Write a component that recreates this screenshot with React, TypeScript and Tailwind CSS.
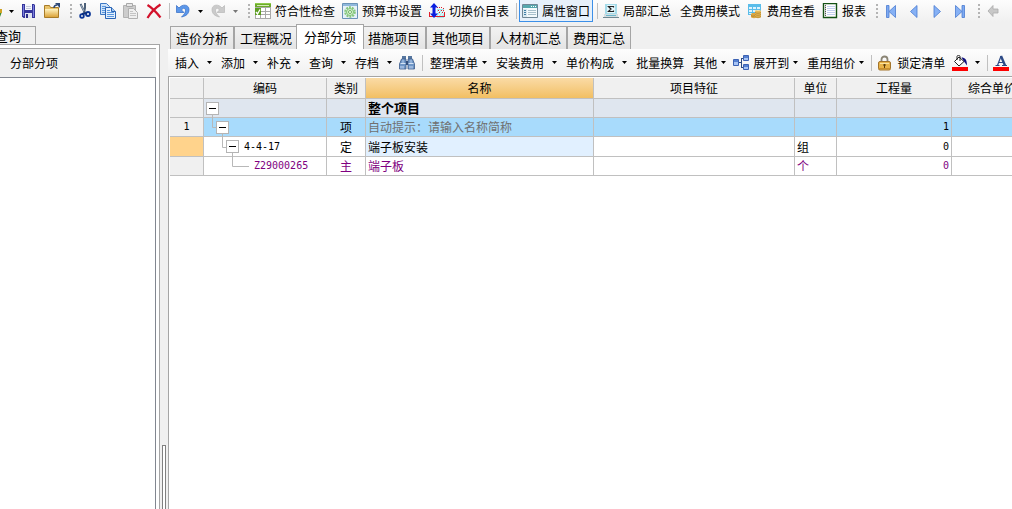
import type { ReactNode } from 'react'
import { clsx } from 'clsx'

const Icon = ({ children }: { children: ReactNode }) => (
  <svg width="16" height="16" viewBox="0 0 16 16" className="shrink-0" aria-hidden="true">
    {children}
  </svg>
)

const SaveIcon = () => (
  <Icon>
    <path d="M1 1h12l1 1v13H2.500L1 13.500z" fill="#35359c" />
    <path d="M2 2h1v11H2zM12 2h1v12h-1z" fill="#7a80dc" />
    <path d="M4 1h7v6H4z" fill="#f4f6fc" />
    <path d="M5 3.500h5M5 5.500h5" stroke="#c3c8da" />
    <path d="M4 10h7v5H4z" fill="#dfe3f0" />
    <path d="M5 11h2v4H5z" fill="#2d2d8a" />
  </Icon>
)

const FolderIcon = () => (
  <Icon>
    <defs>
      <linearGradient id="folder" x1="0" y1="0" x2="0" y2="1">
        <stop offset="0" stopColor="#fff3bf" />
        <stop offset="1" stopColor="#dca43a" />
      </linearGradient>
    </defs>
    <path d="M0.500 2.500h5l1 2h8v10h-14z" fill="#e9c36a" stroke="#a87c28" />
    <path d="M1 6h13v8H1z" fill="url(#folder)" />
    <path d="M10 5c0-2 1-3 3-3" stroke="#2f4a78" strokeWidth="1.500" fill="none" />
    <path d="M11 0h5v5z" fill="#2f4a78" />
  </Icon>
)

const CutIcon = () => (
  <Icon>
    <path d="M3.500 1l4.500 9M8 0v5L7 10" stroke="#4b5f78" strokeWidth="2" fill="none" />
    <path d="M4 2l3 6" stroke="#a5b3c4" />
    <circle cx="5" cy="13" r="1.800" fill="none" stroke="#0a3596" strokeWidth="1.800" />
    <circle cx="11" cy="11" r="2" fill="none" stroke="#0a3596" strokeWidth="1.800" />
    <path d="M5 11l5-1" stroke="#0b2f80" strokeWidth="2" />
  </Icon>
)

const CopyIcon = () => (
  <Icon>
    <path d="M0.500 0.500h6l3 3v8h-9z" fill="#cfe3f9" stroke="#3d78c4" />
    <path d="M2 3.500h4M2 5.500h4M2 7.500h4M2 9.500h4" stroke="#5b97dd" />
    <path d="M5.500 4.500h6l4 4v7h-10z" fill="#e4f0fd" stroke="#2a64b5" />
    <path d="M11.500 4.500v4h4" fill="#a9cbf0" stroke="#2a64b5" />
    <path d="M7 7.500h3M7 9.500h7M7 11.500h7M7 13.500h7" stroke="#5b97dd" />
  </Icon>
)

const PasteIcon = () => (
  <Icon>
    <path d="M0.500 2.500h12v12h-12z" fill="#cdcdcd" stroke="#b2b2b2" />
    <path d="M3.500 0.500h6v3h-6z" fill="#e6e6e6" stroke="#a8a8a8" />
    <path d="M5.500 5.500h5l4 4v6h-9z" fill="#efefef" stroke="#b0b0b0" />
    <path d="M7 8.500h3M7 10.500h6M7 12.500h6" stroke="#c4c4c4" />
  </Icon>
)

const DeleteIcon = () => (
  <Icon>
    <path d="M1.500 2c5 3 9 7.500 13 12.500" stroke="#d3122c" strokeWidth="2.200" fill="none" />
    <path d="M14.500 1.500C9 5 5 9 1.500 15" stroke="#d3122c" strokeWidth="2.200" fill="none" />
  </Icon>
)

const TurnIcon = ({ redo }: { redo?: boolean }) => (
  <Icon>
    <g
      transform={redo ? 'matrix(-1 0 0 1 16 0)' : undefined}
      fill={redo ? '#cbcbcb' : '#5b97ea'}
      stroke={redo ? '#b8b8b8' : '#2f69c4'}
      strokeWidth="0.700"
    >
      <path d="M1.500 2.500v7h7.500L6.500 7C8 4.500 10.500 5 10.500 7.500c0 2.500-1.500 4-4 6.500 5-1 7.500-3.500 7.500-7.500C14 1.500 7.500 0.500 4 5z" />
    </g>
  </Icon>
)

const CheckTableIcon = () => (
  <Icon>
    <path d="M0 0h16v4H0z" fill="#6cab2a" />
    <path d="M0 0h16v1H0z" fill="#8fcb4c" />
    <path d="M2 2h12v1H2z" fill="#d5edb5" />
    <path d="M0 4h16v12H0z" fill="#a9a9a9" />
    <path d="M6 5h4v3H6zM11 5h4v3h-4zM6 9h4v2H6zM11 9h4v2h-4zM1 12h4v3H1zM6 12h4v3H6zM11 12h4v3h-4z" fill="#fff" />
    <path d="M0 5h6v7H0z" fill="#5d9e22" />
    <path d="M1 9l1.500 2L5 6.500" stroke="#fff" strokeWidth="1.300" fill="none" />
  </Icon>
)

const SettingsIcon = () => (
  <Icon>
    <path d="M0.500 0.500h15v15h-15z" fill="#e6f1fa" stroke="#6b93b8" />
    <path d="M1 1h14v2H1z" fill="#8fb8dc" />
    <circle cx="8" cy="9" r="4.800" fill="none" stroke="#86c77c" strokeWidth="2" strokeDasharray="2 1" />
    <circle cx="8" cy="9" r="3.500" fill="#d8f0d2" stroke="#7cc271" />
    <circle cx="8" cy="9" r="1.500" fill="#fff" stroke="#6bb55f" />
  </Icon>
)

const SwitchIcon = () => (
  <Icon>
    <path d="M8 6h7v9H8z" fill="#a4edf2" />
    <path d="M9 13l5-6M11 14l4-5M8 10l3-3" stroke="#fff" />
    <path d="M8 4.500h6M14.500 5v4" stroke="#e0202c" strokeDasharray="1 1" fill="none" />
    <path d="M9 7.500h4M10 9.500h4" stroke="#e0202c" strokeDasharray="1 2" />
    <path d="M0 13.500h16M15.500 9v5M0.500 9v5" stroke="#e0202c" />
    <path d="M5 0l4 4.500H6.500v6H9L5 15 1 10.500h2.500v-6H1z" fill="#0a1fe0" />
  </Icon>
)

const WindowIcon = () => (
  <Icon>
    <path d="M0.500 1.500h15v13h-15z" fill="#f4fafc" stroke="#6f8796" />
    <path d="M1 2h14v3H1z" fill="#56a8ad" />
    <path d="M9 3h1v1H9zM11 3h1v1h-1zM13 3h1v1h-1z" fill="#fff" />
    <path d="M1 6h4v8H1z" fill="#d8e8f0" />
    <path d="M2 7.500h2M2 9.500h2M2 11.500h2" stroke="#3f7ea6" />
    <path d="M6 7.500h8M6 9.500h8M6 11.500h8" stroke="#a8c0cc" />
  </Icon>
)

const SumIcon = () => (
  <Icon>
    <path d="M2 1h12v10H2z" fill="#a5dbe9" />
    <path d="M4 2h8v8H4z" fill="#e4f6fb" />
    <path d="M10.500 4.500V3.500h-5l2.500 2.500-2.500 2.500h5v-1" stroke="#222" strokeWidth="1.200" fill="none" />
    <path d="M1 11h14v3H1z" fill="#d3dde1" />
    <path d="M0 14.500h16" stroke="#6f8791" />
    <path d="M3 12.500h10" stroke="#6cb8cc" />
  </Icon>
)

const CostIcon = () => (
  <Icon>
    <path d="M1 1h13v11H1z" fill="#5bbdea" />
    <path d="M2 4h3v2H2zM6 4h3v2H6zM10 4h3v2h-3zM2 7h3v2H2zM6 7h3v2H6zM2 10h3v1H2z" fill="#dff3fd" />
    <path d="M4 11c0-1.500 6-1.500 6 0v3c0 1.500-6 1.500-6 0z" fill="#dba640" />
    <path d="M8 8c0-1.500 6-1.500 6 0v6c0 1.500-6 1.500-6 0z" fill="#e6b955" />
    <path d="M8 9.500c1 1 5 1 6 0M8 11.500c1 1 5 1 6 0M8 13.500c1 1 5 1 6 0M4 12.500c1 1 3 1 4 0" stroke="#a77722" strokeWidth="0.700" fill="none" />
    <path d="M8.500 8c1-0.800 4-0.800 5 0" stroke="#f8e2a4" fill="none" />
  </Icon>
)

const ReportIcon = () => (
  <Icon>
    <path d="M1.500 0.500h13v14h-13z" fill="#fff" stroke="#145214" strokeWidth="1.400" />
    <path d="M2 1h2v13H2z" fill="#c9d3c9" />
    <path d="M3.500 2v12" stroke="#555" strokeDasharray="1 1" />
    <path d="M5 3.500h8M5 5.500h8M5 7.500h8M5 9.500h8M5 11.500h8" stroke="#c4cff0" />
  </Icon>
)

const StepIcon = ({ last, bar }: { last?: boolean; bar?: boolean }) => (
  <Icon>
    <g transform={last ? 'matrix(-1 0 0 1 16 0)' : undefined} stroke="#4a7bd0" strokeWidth="0.800">
      {bar && <path d="M3.500 2.500h2.500v12h-2.500z" fill="#7eaaf2" />}
      <path d={bar ? 'M12.500 2.500v12L6 8.500z' : 'M11 2.500v12L4.500 8.500z'} fill="#86b1f5" />
    </g>
  </Icon>
)

const BackIcon = () => (
  <Icon>
    <path d="M8 2.500V6h5v4H8v3.500L3 8z" fill="#c8c8c8" stroke="#ababab" strokeWidth="0.800" />
  </Icon>
)

const BinocularsIcon = () => (
  <Icon>
    <path d="M3 1h4v3H3zM9 1h4v3H9z" fill="#56779f" />
    <path d="M2.500 4h4.500v10H0.500V9zM9 4h4.500l2 5v5H9z" fill="#6f96c6" stroke="#3c5c8c" strokeWidth="0.800" />
    <path d="M7 6h2v4H7z" fill="#34507c" />
    <path d="M1.500 8.500h5M9.500 8.500h5" stroke="#d5e3f5" />
    <path d="M4 4.500V8M12 4.500V8" stroke="#b4cbea" />
    <path d="M1 11h4v2.500H1zM10 11h4v2.500h-4z" fill="#9cb8de" />
  </Icon>
)

const ExpandIcon = () => (
  <Icon>
    <path d="M5 7.500h4M8.500 3v10M8 3.500h3M8 12.500h3" stroke="#2c4a80" fill="none" />
    <path d="M0.500 4.500h5v6h-5zM10.500 0.500h5v5h-5zM10.500 9.500h5v5h-5z" fill="#a9c5f4" stroke="#3c62b4" />
    <path d="M1 5h4v2H1zM11 1h4v2h-4zM11 10h4v2h-4z" fill="#5580d0" />
  </Icon>
)

const LockIcon = () => (
  <Icon>
    <path d="M4.500 8V4.500c0-4 6-4 6 0V8" stroke="#8a8474" strokeWidth="1.800" fill="none" />
    <rect x="1.500" y="6.500" width="12" height="8.500" rx="1.500" fill="#e8b44a" stroke="#a3742c" />
    <path d="M3 8.500h9" stroke="#fbe3a0" />
    <path d="M2 13.500h11" stroke="#c98f2e" />
    <path d="M6.500 9h2v2h-0.500v2h-1v-2h-0.500z" fill="#5c3d0c" />
  </Icon>
)

const FillIcon = () => (
  <Icon>
    <path d="M7 2l5 4.500L7 11 2.500 6.500z" fill="#fff" stroke="#222" />
    <path d="M5 5V1.500c0-1.500 3-1.500 3 0V6" stroke="#222" fill="none" />
    <path d="M9.500 2.500c3.500 0 5.500 2 5.500 8-1-1.500-2-2.500-3-4z" fill="#10107c" />
    <path d="M0 12h16v4H0z" fill="#fe0000" />
  </Icon>
)

const FontColorIcon = () => (
  <Icon>
    <path d="M2.500 10.500h4M9 10.500h5" stroke="#2d4a86" />
    <path d="M4.500 10.500L8 1" stroke="#2d4a86" strokeWidth="1.200" />
    <path d="M8 1l4 9.500" stroke="#2d4a86" strokeWidth="2.400" />
    <path d="M6 7.500h5" stroke="#2d4a86" />
    <path d="M0 12h16v4H0z" fill="#fe0000" />
  </Icon>
)

const Arrow = ({ dim }: { dim?: boolean }) => (
  <svg width="5" height="3" viewBox="0 0 5 3" className="shrink-0" aria-hidden="true">
    <path d="M0 0h5L2.500 3z" fill={dim ? '#777' : '#000'} />
  </svg>
)

const Grip = () => (
  <span className="flex shrink-0 flex-col gap-0.5">
    {[0, 1, 2, 3].map((dot) => (
      <span key={dot} className="size-0.5 bg-[#b4b4b4]" />
    ))}
  </span>
)

const Separator = () => <span className="-mr-0.5 h-4 w-px shrink-0 bg-[#c0c0c0]" />

const ToolGroup = ({ children }: { children: ReactNode }) => (
  <div className="flex h-full shrink-0 items-center gap-[7px] pr-2.5 pl-[5px]">{children}</div>
)

type ToolButtonProps = {
  label?: string
  title?: string
  icon?: ReactNode
  menu?: 'near' | 'far'
  pressed?: boolean
}

const ToolButton = ({ label, title, icon, menu, pressed }: ToolButtonProps) => (
  <button
    type="button"
    aria-label={label ? undefined : title}
    aria-pressed={pressed}
    className={clsx(
      'flex shrink-0 items-center whitespace-nowrap',
      menu === 'far' ? 'gap-2' : 'gap-1',
      !icon && label && 'pl-0.5',
      pressed && 'h-full border border-t-0 border-[#3c8fe8] bg-[#e6f0fa] px-0.5',
    )}
  >
    {icon}
    {label && <span>{label}</span>}
    {menu && <Arrow />}
  </button>
)

const ArrowButton = ({ title, dim }: { title: string; dim?: boolean }) => (
  <button type="button" aria-label={title} className="flex h-4 shrink-0 items-center">
    <Arrow dim={dim} />
  </button>
)

const MainToolbar = () => (
  <div className="flex h-[22px] shrink-0 items-center overflow-hidden bg-linear-to-b from-[#fdfdfd] to-[#f0f0f0]">
    <div className="flex h-full shrink-0 items-center gap-[7px] pr-2.5">
      <button type="button" aria-label="新建" className="flex items-center gap-[5px]">
        <svg width="4" height="16" viewBox="0 0 4 16" aria-hidden="true">
          <path d="M0 6h2v4H0z" fill="#d1a324" />
          <path d="M0 10h1.500l-1.500 4z" fill="#3c8a2c" />
        </svg>
        <Arrow />
      </button>
      <ToolButton title="保存" icon={<SaveIcon />} />
      <ToolButton title="打开" icon={<FolderIcon />} />
    </div>
    <Grip />
    <ToolGroup>
      <ToolButton title="剪切" icon={<CutIcon />} />
      <ToolButton title="复制" icon={<CopyIcon />} />
      <ToolButton title="粘贴" icon={<PasteIcon />} />
      <ToolButton title="删除" icon={<DeleteIcon />} />
      <Separator />
      <ToolButton title="撤销" icon={<TurnIcon />} />
      <ArrowButton title="撤销列表" />
      <ToolButton title="恢复" icon={<TurnIcon redo />} />
      <ArrowButton title="恢复列表" dim />
    </ToolGroup>
    <Grip />
    <ToolGroup>
      <ToolButton label="符合性检查" icon={<CheckTableIcon />} />
      <ToolButton label="预算书设置" icon={<SettingsIcon />} />
      <ToolButton label="切换价目表" icon={<SwitchIcon />} />
      <div className="flex h-full items-center gap-1">
        <Separator />
        <ToolButton label="属性窗口" icon={<WindowIcon />} pressed />
        <Separator />
      </div>
      <ToolButton label="局部汇总" icon={<SumIcon />} />
      <ToolButton label="全费用模式" />
      <ToolButton label="费用查看" icon={<CostIcon />} />
      <ToolButton label="报表" icon={<ReportIcon />} />
    </ToolGroup>
    <Grip />
    <ToolGroup>
      <ToolButton title="首个" icon={<StepIcon bar />} />
      <ToolButton title="上一个" icon={<StepIcon />} />
      <ToolButton title="下一个" icon={<StepIcon last />} />
      <ToolButton title="末个" icon={<StepIcon last bar />} />
    </ToolGroup>
    <Grip />
    <ToolGroup>
      <ToolButton title="后退" icon={<BackIcon />} />
    </ToolGroup>
  </div>
)

const EditToolbar = () => (
  <div className="flex h-[27px] shrink-0 items-center gap-[7px] overflow-hidden bg-linear-to-b from-[#fdfdfd] to-[#f0f0f0] pl-[5px]">
    <ToolButton label="插入" menu="far" />
    <ToolButton label="添加" menu="far" />
    <ToolButton label="补充" menu="near" />
    <ToolButton label="查询" menu="far" />
    <ToolButton label="存档" menu="far" />
    <ToolButton title="查找" icon={<BinocularsIcon />} />
    <Separator />
    <ToolButton label="整理清单" menu="near" />
    <ToolButton label="安装费用" menu="far" />
    <ToolButton label="单价构成" menu="far" />
    <ToolButton label="批量换算" />
    <ToolButton label="其他" menu="near" />
    <ToolButton label="展开到" icon={<ExpandIcon />} menu="near" />
    <ToolButton label="重用组价" menu="near" />
    <Separator />
    <ToolButton label="锁定清单" icon={<LockIcon />} />
    <ToolButton title="填充颜色" icon={<FillIcon />} />
    <ArrowButton title="填充颜色列表" />
    <Separator />
    <ToolButton title="字体颜色" icon={<FontColorIcon />} />
  </div>
)

const tabs = ['造价分析', '工程概况', '分部分项', '措施项目', '其他项目', '人材机汇总', '费用汇总']

const TabBar = () => (
  <div role="tablist" className="flex h-[27px] shrink-0 items-end pl-0.5 text-[13px] leading-4">
    {tabs.map((tab) => {
      const selected = tab === '分部分项'
      return (
        <button
          key={tab}
          type="button"
          role="tab"
          aria-selected={selected}
          className={clsx(
            'shrink-0 border border-b-0 border-[#a5a5a5] whitespace-nowrap',
            selected
              ? 'relative z-10 -mx-0.5 h-[25px] bg-white px-[7px]'
              : 'h-[23px] bg-linear-to-b from-[#f2f2f2] to-[#e4e4e4] px-[5px]',
          )}
        >
          {tab}
        </button>
      )
    })}
  </div>
)

const SidePanel = () => (
  <aside className="flex w-[168px] shrink-0">
    <div className="flex flex-1 flex-col">
      <div role="tablist" className="flex h-[22px] items-end text-[13px] leading-4">
        <button
          type="button"
          role="tab"
          aria-selected="true"
          className="-ml-2 h-[18px] border border-b-0 border-[#a5a5a5] pr-3.5 pl-0.5"
        >
          查询
        </button>
      </div>
      <div className="flex flex-1 flex-col border-t border-r border-[#a5a5a5] bg-white pt-[3px] pr-[3px]">
        <div className="flex h-[29px] items-center border-t border-[#a5a5a5] bg-[#f0f0f0] pl-2.5">分部分项</div>
        <div className="flex-1 border-t border-r border-[#828790] bg-white" />
      </div>
    </div>
    <div className="flex w-2 flex-col items-center">
      <div className="mt-auto h-16 w-1 border border-b-0 border-[#808080] bg-white" />
    </div>
  </aside>
)

type Row = {
  no: string
  depth: number
  leaf?: boolean
  code: string
  kind: string
  name: string
  unit: string
  quantity: string
  rowClass: string
  headClass: string
  nameClass: string
}

const rows: Row[] = [
  {
    no: '',
    depth: 0,
    code: '',
    kind: '',
    name: '整个项目',
    unit: '',
    quantity: '',
    rowClass: 'h-[19px] bg-[#dfe6ef]',
    headClass: 'bg-[#f0f0f0]',
    nameClass: 'text-[13px] font-bold',
  },
  {
    no: '1',
    depth: 1,
    code: '',
    kind: '项',
    name: '自动提示：请输入名称简称',
    unit: '',
    quantity: '1',
    rowClass: 'h-[19px] bg-[#a8dbfc]',
    headClass: 'bg-[#f0f0f0]',
    nameClass: 'text-[#707070]',
  },
  {
    no: '',
    depth: 2,
    code: '4-4-17',
    kind: '定',
    name: '端子板安装',
    unit: '组',
    quantity: '0',
    rowClass: 'h-5 bg-white',
    headClass: 'bg-[#ffd38c]',
    nameClass: 'bg-[#e1f0ff]',
  },
  {
    no: '',
    depth: 3,
    leaf: true,
    code: 'Z29000265',
    kind: '主',
    name: '端子板',
    unit: '个',
    quantity: '0',
    rowClass: 'h-[19px] bg-white text-[#800080]',
    headClass: 'bg-[#f0f0f0]',
    nameClass: '',
  },
]

const columns = [
  { title: '', width: 'w-[34px]' },
  { title: '编码', width: 'w-[123px]' },
  { title: '类别', width: 'w-[39px]' },
  { title: '名称', width: 'w-[228px]', active: true },
  { title: '项目特征', width: 'w-[201px]' },
  { title: '单位', width: 'w-[42px]' },
  { title: '工程量', width: 'w-[115px]' },
  { title: '综合单价', width: 'w-[81px]' },
]

// Elbow line from the parent's box down to this row
const Branch = ({ depth, leaf }: { depth: number; leaf?: boolean }) => {
  const x = depth * 10 - 1.5
  const width = depth * 10 + (leaf ? 15 : 2)
  return (
    <svg width={width} height="18" className="shrink-0 overflow-visible" aria-hidden="true">
      {depth > 0 && <path d={`M${x} -4V9.500H${width}`} fill="none" stroke="#b8b8b8" />}
    </svg>
  )
}

const cell = 'border-r border-b border-[#c0c0c0] p-0'
const digits = "font-['DejaVu_Sans_Mono',monospace] text-[10px]"

const ItemTable = () => (
  <div className="flex-1 overflow-hidden border-t border-l border-[#a5a5a5] bg-white pt-px pl-px">
    <table className="w-[863px] table-fixed border-separate border-spacing-0 leading-4">
      <thead>
        <tr className="h-[21px]">
          {columns.map((column) => (
            <th
              key={column.title}
              scope="col"
              className={clsx(
                cell,
                'font-normal',
                column.width,
                column.active ? 'bg-linear-to-b from-[#fadba5] to-[#f2bf62]' : 'bg-[#f0f0f0]',
              )}
            >
              {column.title}
            </th>
          ))}
        </tr>
      </thead>
      <tbody>
        {rows.map((row) => (
          <tr key={row.depth} className={row.rowClass}>
            <th scope="row" className={clsx(cell, digits, 'font-normal', row.headClass)}>
              {row.no}
            </th>
            <td className={cell}>
              <div className="flex h-[18px] items-center">
                <Branch depth={row.depth} leaf={row.leaf} />
                {!row.leaf && (
                  <button
                    type="button"
                    aria-label="折叠"
                    className="flex size-[13px] shrink-0 items-center justify-center border border-[#b4b4b4] bg-white"
                  >
                    <span className="h-px w-[7px] bg-black" />
                  </button>
                )}
                <span className={clsx(digits, 'ml-[5px]')}>{row.code}</span>
              </div>
            </td>
            <td className={clsx(cell, 'text-center')}>{row.kind}</td>
            <td className={clsx(cell, 'pl-0.5', row.nameClass)}>{row.name}</td>
            <td className={cell} />
            <td className={clsx(cell, 'pl-0.5')}>{row.unit}</td>
            <td className={clsx(cell, digits, 'pr-0.5 text-right')}>{row.quantity}</td>
            <td className={cell} />
          </tr>
        ))}
      </tbody>
    </table>
  </div>
)

export default function App() {
  return (
    <div className="flex h-screen flex-col overflow-hidden bg-[#f0f0f0] font-['Noto_Sans_CJK_SC',sans-serif] text-[12px] leading-4 text-black">
      <MainToolbar />
      <div className="flex min-h-0 flex-1">
        <SidePanel />
        <main className="flex min-w-0 flex-1 flex-col">
          <TabBar />
          <EditToolbar />
          <ItemTable />
        </main>
      </div>
    </div>
  )
}
